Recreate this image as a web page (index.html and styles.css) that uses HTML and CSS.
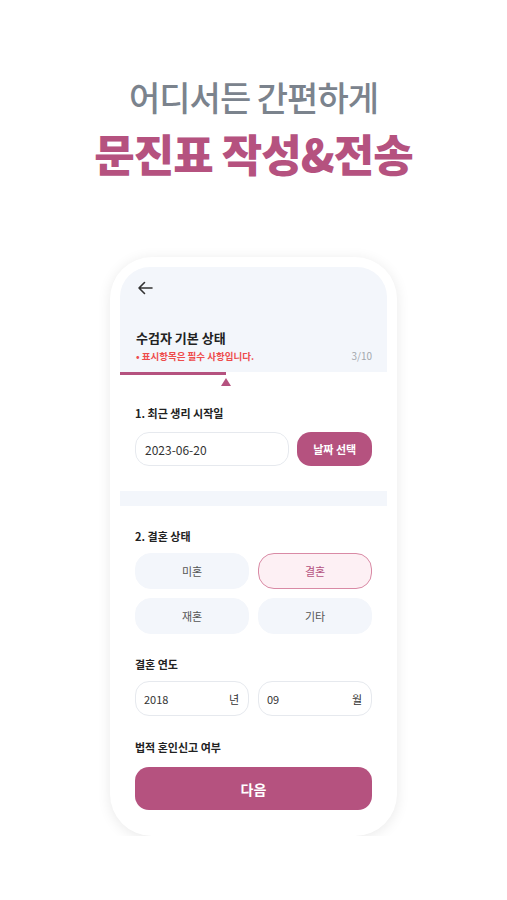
FILE: index.html
```html
<!DOCTYPE html>
<html>
<head>
  <title>문진표 작성</title>
  <link rel="stylesheet" href="styles.css">
</head>
<body>
  <div class="hero">
    <div class="hero-sub">어디서든 간편하게</div>
    <div class="hero-main">문진표 작성&amp;전송</div>
  </div>

  <div class="phone">
    <div class="screen">
      <div class="top">
        <svg class="back" width="16" height="14" viewBox="0 0 16 14">
          <path d="M15 7H2M7.5 1.5L2 7l5.5 5.5" fill="none" stroke="#333" stroke-width="1.6" stroke-linecap="round" stroke-linejoin="round"/>
        </svg>
        <div class="title">수검자 기본 상태</div>
        <div class="note-row">
          <span class="note">• 표시항목은 필수 사항입니다.</span>
          <span class="step">3/10</span>
        </div>
      </div>
      <div class="progress">
        <div class="progress-fill"></div>
        <div class="progress-mark"></div>
      </div>

      <div class="section first">
        <div class="label">1. 최근 생리 시작일</div>
        <div class="date-row">
          <div class="field">2023-06-20</div>
          <button class="pick">날짜 선택</button>
        </div>
      </div>

      <div class="divider"></div>

      <div class="section second">
        <div class="label">2. 결혼 상태</div>
        <div class="options">
          <div class="option">미혼</div>
          <div class="option selected">결혼</div>
          <div class="option">재혼</div>
          <div class="option">기타</div>
        </div>

        <div class="label sub">결혼 연도</div>
        <div class="year-row">
          <div class="field unit"><span>2018</span><span>년</span></div>
          <div class="field unit"><span>09</span><span>월</span></div>
        </div>

        <div class="label sub last">법적 혼인신고 여부</div>
        <button class="next">다음</button>
      </div>
    </div>
  </div>
</body>
</html>
```

FILE: styles.css
```css
body {
  margin: 0;
  background-color: #fff;
  font-family: "Noto Sans CJK KR", "Noto Sans", sans-serif;
  color: #222;
}

.hero {
  padding-top: 76px;
  text-align: center;
}

.hero-sub {
  font-size: 34px;
  line-height: 42px;
  font-weight: 500;
  color: #7b838d;
  letter-spacing: -1px;
}

.hero-main {
  margin-top: 10px;
  font-size: 44px;
  line-height: 50px;
  font-weight: 900;
  color: #b5527f;
  letter-spacing: -1px;
}

.phone {
  width: 267px;
  margin: 79px auto 0;
  padding: 10px;
  background-color: #fff;
  border-radius: 42px;
  box-shadow: 0 2px 14px rgba(0, 0, 0, 0.09);
}

.screen {
  border-radius: 30px;
  overflow: hidden;
  background-color: #fff;
}

.top {
  background-color: #f3f6fb;
  padding: 14px 15px 9px 16px;
}

.back {
  display: block;
  margin-left: 1px;
}

.title {
  margin-top: 34px;
  font-size: 13px;
  line-height: 18px;
  font-weight: 700;
  color: #222;
}

.note-row {
  margin-top: 2px;
  display: flex;
  justify-content: space-between;
  align-items: center;
  line-height: 14px;
}

.note {
  font-size: 9.5px;
  font-weight: 700;
  color: #ee4c4c;
}

.step {
  font-size: 10px;
  color: #a4a8ae;
}

.progress {
  position: relative;
  height: 3px;
  background-color: #fff;
}

.progress-fill {
  width: 106px;
  height: 3px;
  background-color: #b5527f;
}

.progress-mark {
  position: absolute;
  left: 101px;
  top: 6px;
  width: 0;
  height: 0;
  border-left: 5px solid transparent;
  border-right: 5px solid transparent;
  border-bottom: 8px solid #b5527f;
}

.section {
  padding: 0 15px;
}

.section.first {
  padding-top: 30px;
  padding-bottom: 25px;
}

.section.second {
  padding-top: 22px;
  padding-bottom: 16px;
}

.label {
  font-size: 11px;
  line-height: 16px;
  font-weight: 700;
  color: #222;
}

.label.sub {
  margin-top: 22px;
}

.label.last {
  margin-top: 23px;
}

.date-row {
  margin-top: 11px;
  display: flex;
  gap: 8px;
}

.field {
  box-sizing: border-box;
  height: 34px;
  border: 1px solid #e6e9ee;
  border-radius: 14px;
  background-color: #fff;
  padding: 0 9px;
  display: flex;
  align-items: center;
  font-size: 12px;
  color: #333;
}

.date-row .field {
  width: 155px;
}

.pick {
  width: 75px;
  height: 34px;
  border: none;
  border-radius: 14px;
  background-color: #b5527f;
  color: #fff;
  font-family: inherit;
  font-size: 11px;
  font-weight: 700;
}

.divider {
  height: 15px;
  background-color: #f3f6fb;
}

.options {
  margin-top: 9px;
  display: grid;
  grid-template-columns: 1fr 1fr;
  gap: 9px;
}

.option {
  box-sizing: border-box;
  height: 36px;
  border-radius: 16px;
  background-color: #f3f6fb;
  border: 1px solid #f3f6fb;
  display: flex;
  justify-content: center;
  align-items: center;
  font-size: 11px;
  color: #555;
}

.option.selected {
  background-color: #fdf0f4;
  border-color: #d98aa5;
  color: #b5527f;
}

.year-row {
  margin-top: 9px;
  display: grid;
  grid-template-columns: 1fr 1fr;
  gap: 9px;
}

.field.unit {
  height: 35px;
  justify-content: space-between;
  font-size: 11px;
  padding: 0 9px 0 8px;
}

.next {
  display: block;
  width: 100%;
  height: 43px;
  margin-top: 12px;
  border: none;
  border-radius: 14px;
  background-color: #b5527f;
  color: #fff;
  font-family: inherit;
  font-size: 14px;
  font-weight: 700;
}
```
